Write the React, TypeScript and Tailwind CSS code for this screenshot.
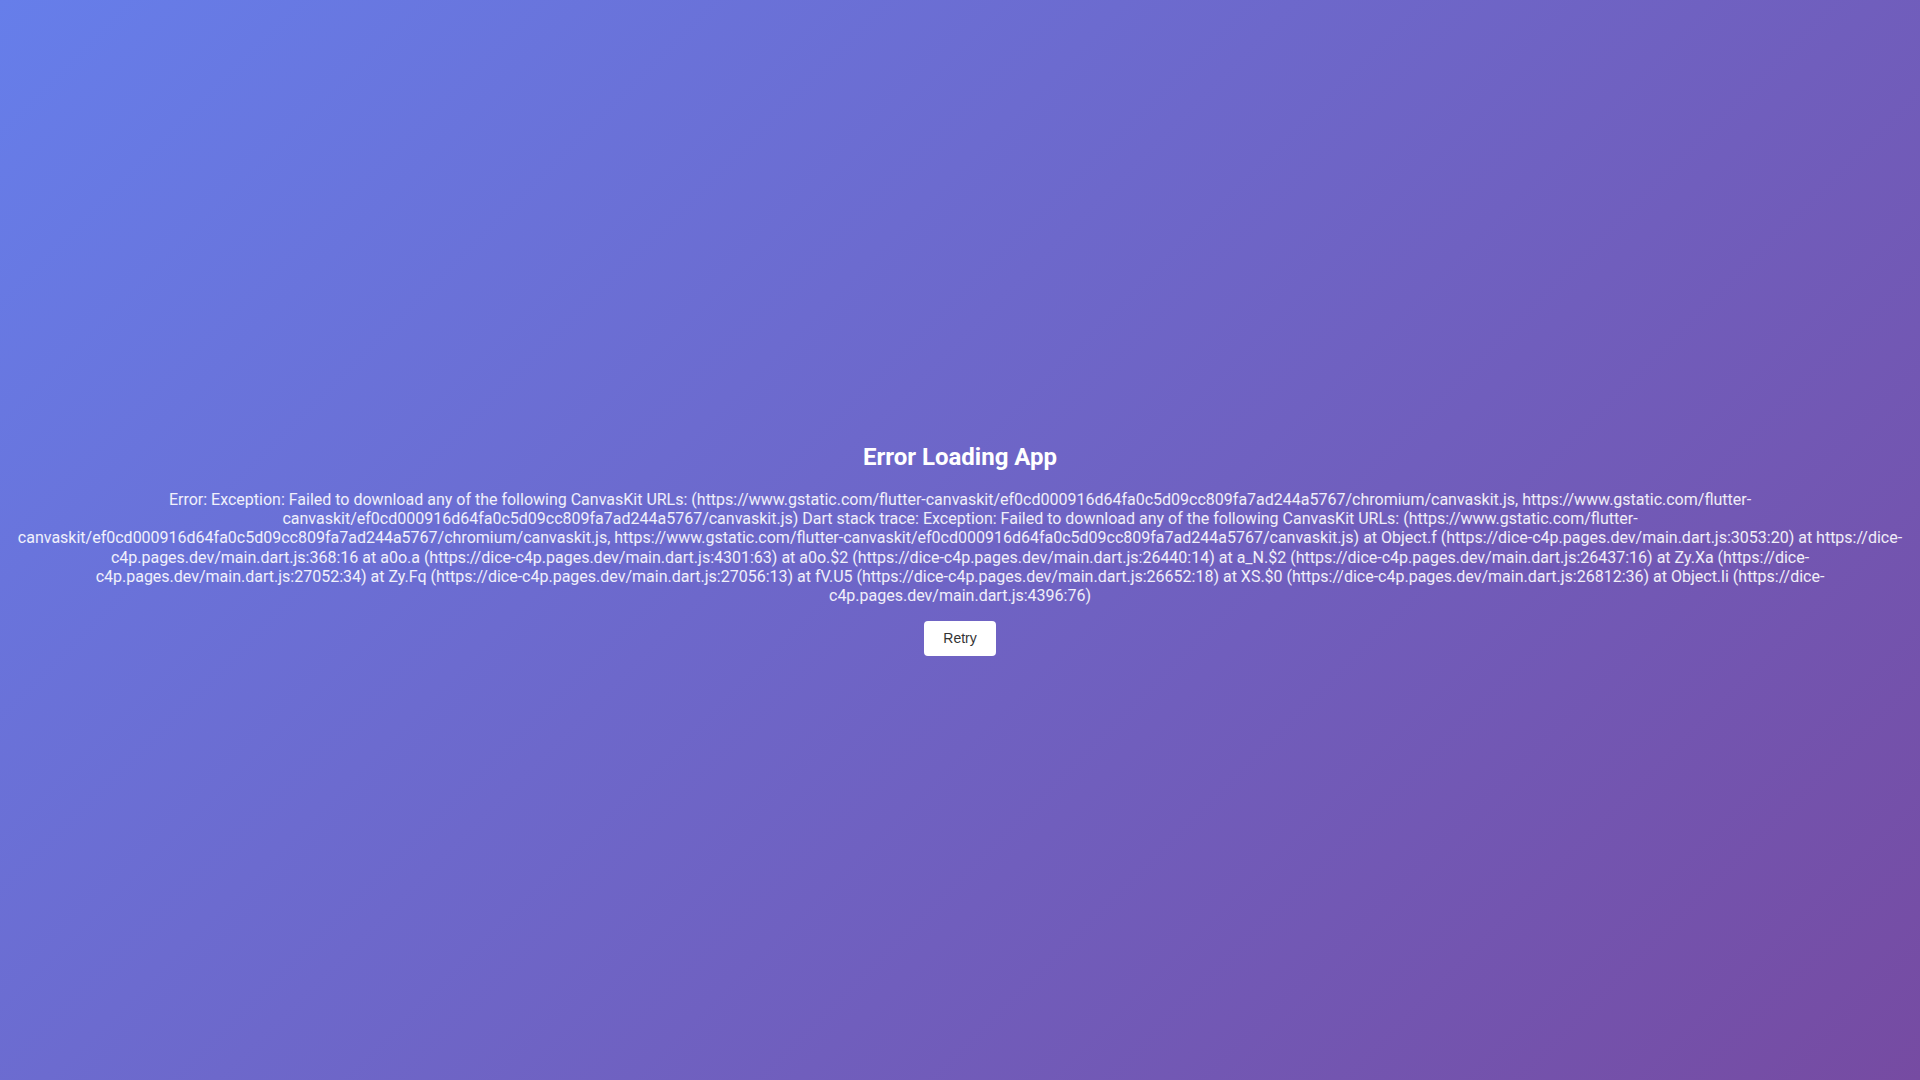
const message =
  'Error: Exception: Failed to download any of the following CanvasKit URLs: (https://www.gstatic.com/flutter-canvaskit/ef0cd000916d64fa0c5d09cc809fa7ad244a5767/chromium/canvaskit.js, https://www.gstatic.com/flutter-canvaskit/ef0cd000916d64fa0c5d09cc809fa7ad244a5767/canvaskit.js) Dart stack trace: Exception: Failed to download any of the following CanvasKit URLs: (https://www.gstatic.com/flutter-canvaskit/ef0cd000916d64fa0c5d09cc809fa7ad244a5767/chromium/canvaskit.js, https://www.gstatic.com/flutter-canvaskit/ef0cd000916d64fa0c5d09cc809fa7ad244a5767/canvaskit.js) at Object.f (https://dice-c4p.pages.dev/main.dart.js:3053:20) at https://dice-c4p.pages.dev/main.dart.js:368:16 at a0o.a (https://dice-c4p.pages.dev/main.dart.js:4301:63) at a0o.$2 (https://dice-c4p.pages.dev/main.dart.js:26440:14) at a_N.$2 (https://dice-c4p.pages.dev/main.dart.js:26437:16) at Zy.Xa (https://dice-c4p.pages.dev/main.dart.js:27052:34) at Zy.Fq (https://dice-c4p.pages.dev/main.dart.js:27056:13) at fV.U5 (https://dice-c4p.pages.dev/main.dart.js:26652:18) at XS.$0 (https://dice-c4p.pages.dev/main.dart.js:26812:36) at Object.li (https://dice-c4p.pages.dev/main.dart.js:4396:76)'

export default function App() {
  return (
    <div className="flex h-screen w-full flex-col items-center justify-center bg-[linear-gradient(135deg,#667eea_0%,#764ba2_100%)] px-[10px] text-center font-['Roboto',sans-serif] text-white">
      <h1 className="mt-[19px] mb-[19px] text-[24px] leading-[28px] font-bold">Error Loading App</h1>
      <p className="text-[16px] leading-[19.1px] text-white/90">{message}</p>
      <button
        type="button"
        className="mt-4 rounded-[4px] bg-white px-[19px] py-[9px] font-['Liberation_Sans',Arial,sans-serif] text-[14px] leading-[17px] text-[#333]"
        onClick={() => window.location.reload()}
      >
        Retry
      </button>
    </div>
  )
}
